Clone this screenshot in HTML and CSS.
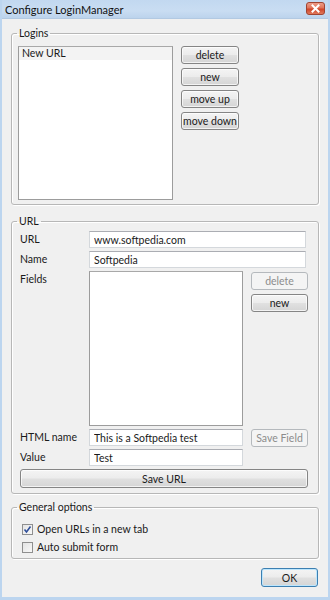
FILE: index.html
```html
<!DOCTYPE html>
<html lang="en">
<head>
  <meta charset="UTF-8" />
  <title>Configure LoginManager</title>
  <link rel="stylesheet" href="styles.css">
</head>
<body>

  <div class="window">
    <div class="titlebar">
      <span class="title">Configure LoginManager</span>
      <svg class="close-btn" width="19" height="13" viewBox="0 0 19 13">
        <defs>
          <linearGradient id="closeFill" x1="0" y1="0" x2="0" y2="1">
            <stop offset="0" stop-color="#eda08c"/>
            <stop offset="0.45" stop-color="#e0745a"/>
            <stop offset="0.55" stop-color="#cf4428"/>
            <stop offset="1" stop-color="#e27e60"/>
          </linearGradient>
        </defs>
        <rect x="0.5" y="0.5" width="18" height="12" rx="2.5" fill="url(#closeFill)" stroke="#a04432"/>
        <path d="M6.5 3.5 L12.5 9.5 M12.5 3.5 L6.5 9.5" stroke="#ffffff" stroke-width="2" stroke-linecap="square"/>
      </svg>
    </div>

    <div class="client">
      <fieldset class="group logins">
        <legend>Logins</legend>
        <div class="logins-body">
          <div class="listbox logins-list">
            <div class="list-item selected">New URL</div>
          </div>
          <div class="btn-column">
            <button class="btn">delete</button>
            <button class="btn">new</button>
            <button class="btn">move up</button>
            <button class="btn">move down</button>
          </div>
        </div>
      </fieldset>

      <fieldset class="group url">
        <legend>URL</legend>
        <div class="url-grid">
          <label class="field-label">URL</label>
          <input class="textbox wide" type="text" value="www.softpedia.com">

          <label class="field-label">Name</label>
          <input class="textbox wide" type="text" value="Softpedia">

          <label class="field-label">Fields</label>
          <div class="listbox fields-list"></div>
          <div class="btn-column side">
            <button class="btn" disabled>delete</button>
            <button class="btn">new</button>
          </div>

          <label class="field-label">HTML name</label>
          <input class="textbox" type="text" value="This is a Softpedia test">
          <button class="btn save-field" disabled>Save Field</button>

          <label class="field-label">Value</label>
          <input class="textbox" type="text" value="Test">
          <div></div>

          <button class="btn save-url">Save URL</button>
        </div>
      </fieldset>

      <fieldset class="group options">
        <legend>General options</legend>
        <div class="options-body">
          <label class="check-row">
            <span class="checkbox checked">
              <svg width="9" height="9" viewBox="0 0 9 9">
                <path d="M1.5 4.5 L3.5 7 L7.5 1.5" fill="none" stroke="#2f4f9a" stroke-width="1.6"/>
              </svg>
            </span>
            Open URLs in a new tab
          </label>
          <label class="check-row">
            <span class="checkbox"></span>
            Auto submit form
          </label>
        </div>
      </fieldset>

      <div class="footer">
        <button class="btn ok-btn">OK</button>
      </div>
    </div>
  </div>

</body>
</html>
```

FILE: styles.css
```css
body {
  margin: 0;
  padding: 0;
  font-family: Lato, "Noto Sans", sans-serif;
  font-size: 10.5px;
  color: #1a1a1a;
  background: #f0f0f0;
}

.window {
  width: 330px;
  height: 600px;
  box-sizing: border-box;
  display: flex;
  flex-direction: column;
  background: #f0f0f0;
  border-left: 2px solid #bcd5ef;
  border-right: 2px solid #bcd5ef;
  border-bottom: 3px solid #bcd5ef;
}

/* Title bar */
.titlebar {
  height: 18px;
  flex: none;
  display: flex;
  align-items: center;
  justify-content: space-between;
  padding: 0 3px 0 3px;
  background: linear-gradient(to bottom, #c2d8f0 0%, #c9ddf2 60%, #bcd3ec 100%);
  border-bottom: 1px solid #b2c9e2;
}

.title {
  font-size: 11px;
  color: #111;
}

.close-btn {
  display: block;
  margin-top: -2px;
}

.client {
  flex: 1;
  display: flex;
  flex-direction: column;
  padding: 8px 9px 0 9px;
}

/* Group boxes */
.group {
  margin: 0;
  padding: 0;
  border: 1px solid #b7b7b7;
  border-radius: 3px;
  box-shadow: inset 1px 1px 0 #ffffff, 1px 1px 0 #ffffff;
  min-width: 0;
}

.group legend {
  margin-left: 5px;
  padding: 0 2px;
  line-height: 13px;
}

.logins-body {
  display: flex;
  gap: 8px;
  padding: 6px 6px 4px 6px;
}

.listbox {
  box-sizing: border-box;
  background: #ffffff;
  border: 1px solid #9c9c9c;
  border-top-color: #a8a8a8;
}

.logins-list {
  width: 155px;
  height: 154px;
}

.list-item {
  padding: 0 3px;
  line-height: 13px;
}

.list-item.selected {
  background: #f3f3f3;
}

.btn-column {
  display: flex;
  flex-direction: column;
  gap: 4px;
}

.btn {
  box-sizing: border-box;
  width: 58px;
  height: 18px;
  padding: 0;
  font-family: inherit;
  font-size: 10.5px;
  color: #1a1a1a;
  border: 1px solid #858585;
  border-radius: 3px;
  background: linear-gradient(to bottom, #f4f4f4 0%, #ececec 48%, #e0e0e0 52%, #d5d5d5 100%);
  box-shadow: inset 0 0 0 1px rgba(255, 255, 255, 0.7);
}

.btn:disabled {
  color: #8c8c8c;
  border-color: #b5b9bd;
  background: #f4f4f4;
  box-shadow: none;
}

.group.url {
  margin-top: 10px;
}

.url-grid {
  display: grid;
  grid-template-columns: 61px 154px 57px;
  column-gap: 8px;
  row-gap: 3px;
  grid-template-rows: 17px 17px 155px 17px 17px 19px;
  padding: 3px 8px 5px 8px;
}

.field-label {
  line-height: 14px;
  padding-top: 1px;
}

.textbox {
  box-sizing: border-box;
  height: 17px;
  width: 100%;
  margin: 0;
  padding: 0 4px;
  font-family: inherit;
  font-size: 10.5px;
  color: #1a1a1a;
  background: #ffffff;
  border: 1px solid #d4d8dc;
  border-top-color: #abadb3;
  outline: none;
}

.textbox.wide {
  grid-column: 2 / 4;
  width: auto;
  margin-right: 2px;
}

.fields-list {
  height: 155px;
}

.btn-column.side {
  padding-top: 1px;
}

.side .btn,
.save-field {
  width: 57px;
}

.save-field {
  height: 18px;
}

.save-url {
  grid-column: 1 / 4;
  width: auto;
  height: 19px;
}

/* General options */
.group.options {
  margin-top: 7px;
}

.options-body {
  display: flex;
  flex-direction: column;
  padding: 6px 10px 2px 10px;
}

.check-row {
  display: flex;
  align-items: center;
  gap: 4px;
  height: 18px;
}

.checkbox {
  box-sizing: border-box;
  width: 11px;
  height: 11px;
  display: flex;
  align-items: center;
  justify-content: center;
  border: 1px solid #8f8f8f;
  background: linear-gradient(135deg, #e4e4e4 0%, #f8f8f8 100%);
}

.footer {
  display: flex;
  justify-content: flex-end;
  padding-top: 9px;
  padding-right: 1px;
}

.ok-btn {
  width: 57px;
  height: 19px;
  border-color: #3c7fb1;
  box-shadow: inset 0 0 0 1px #bde6fd;
}
```
